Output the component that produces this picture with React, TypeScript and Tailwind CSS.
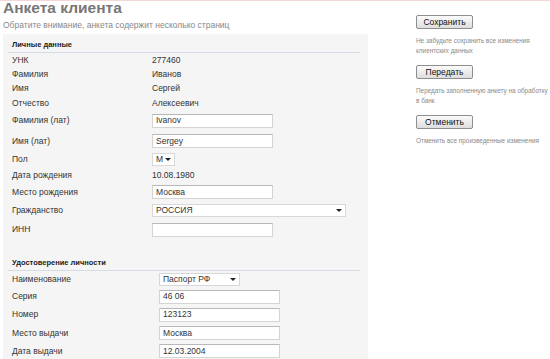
import React from "react";

type Row = { label: string; value?: string; kind?: "text" | "input" | "select"; width?: string; h: string };

const personal: Row[] = [
    { label: "УНК", value: "277460", h: "h-[14px]" },
    { label: "Фамилия", value: "Иванов", h: "h-[14px]" },
    { label: "Имя", value: "Сергей", h: "h-[15px]" },
    { label: "Отчество", value: "Алексеевич", h: "h-[14px]" },
    { label: "Фамилия (лат)", value: "Ivanov", kind: "input", h: "h-[21px]" },
    { label: "Имя (лат)", value: "Sergey", kind: "input", h: "h-[20px]" },
    { label: "Пол", value: "М", kind: "select", width: "w-[23px]", h: "h-[16px]" },
    { label: "Дата рождения", value: "10.08.1980", h: "h-[17px]" },
    { label: "Место рождения", value: "Москва", kind: "input", h: "h-[16px]" },
    { label: "Гражданство", value: "РОССИЯ", kind: "select", width: "w-[194px]", h: "h-[21px]" },
    { label: "ИНН", value: "", kind: "input", h: "h-[17px]" },
];

const identity: Row[] = [
    { label: "Наименование", value: "Паспорт РФ", kind: "select", width: "w-[81px]", h: "h-[17px]" },
    { label: "Серия", value: "46 06", kind: "input", h: "h-[17px]" },
    { label: "Номер", value: "123123", kind: "input", h: "h-[19px]" },
    { label: "Место выдачи", value: "Москва", kind: "input", h: "h-[18px]" },
    { label: "Дата выдачи", value: "12.03.2004", kind: "input", h: "h-[18px]" },
];

const Field = ({ row }: { row: Row }) => {
    if (row.kind === "input") {
        return (
            <div className="w-[121px] h-[14px] bg-white border border-[#d4d4d4] border-t-[#b8b8b8] px-[3px] flex items-center text-[8.5px] text-[#333]">
                {row.value}
            </div>
        );
    }
    if (row.kind === "select") {
        return (
            <div className={`${row.width} h-[13px] bg-white border border-[#d8d8d8] pl-[3px] pr-[3px] flex items-center justify-between text-[8.5px] text-[#333]`}>
                <span>{row.value}</span>
                <span className="w-0 h-0 border-l-[3px] border-r-[3px] border-t-[3px] border-l-transparent border-r-transparent border-t-[#222]" />
            </div>
        );
    }
    return <span className="text-[8.5px] text-[#333]">{row.value}</span>;
};

const Section = ({ title, rows, labelW }: { title: string; rows: Row[]; labelW: string }) => (
    <div>
        <div className="mx-[5px] w-[352px] border-b border-[#d6dce6] pl-[4px] pb-[2px] text-[7.5px] font-bold text-[#222] leading-[10px]">
            {title}
        </div>
        {rows.map((r) => (
            <div key={r.label} className={`flex items-center ${r.h}`}>
                <div className={`${labelW} pl-[9px] text-[8.5px] text-[#333]`}>{r.label}</div>
                <Field row={r} />
            </div>
        ))}
    </div>
);

const Action = ({ label, note }: { label: string; note: React.ReactNode }) => (
    <div className="flex flex-col">
        <button className="w-[57px] h-[14px] border border-[#8e8e8e] rounded-[2px] bg-gradient-to-b from-[#fbfbfb] to-[#dedede] text-[8.5px] text-[#111] leading-none">
            {label}
        </button>
        <p className="mt-[7px] whitespace-nowrap text-[6.4px] leading-[10px] text-[#8a8a8a]">{note}</p>
    </div>
);

export default function App() {
    return (
        <div className="w-[550px] h-[359px] overflow-hidden bg-white border-t border-[#f3d6d6] font-['Liberation_Sans',Arial,sans-serif]">
            <div className="flex">
                <div className="w-[368px] shrink-0">
                    <h1 className="pl-[3px] text-[15.5px] leading-[14px] font-bold text-[#777]">Анкета клиента</h1>
                    <p className="pl-[3px] mt-[4px] text-[8.5px] leading-[12px] text-[#888]">
                        Обратите внимание, анкета содержит несколько страниц
                    </p>
                    <div className="ml-[3px] mt-[3px] w-[365px] h-[330px] bg-[#f5f5f5] pt-[6px]">
                        <Section title="Личные данные" rows={personal} labelW="w-[149px]" />
                        <div className="h-[20px]" />
                        <Section title="Удостоверение личности" rows={identity} labelW="w-[156px]" />
                    </div>
                </div>
                <div className="ml-[48px] mt-[14px] flex flex-col gap-[9px]">
                    <Action label="Сохранить" note={<>Не забудьте сохранить все изменения<br />клиентских данных</>} />
                    <Action label="Передать" note={<>Передать заполненную анкету на обработку<br />в банк</>} />
                    <Action label="Отменить" note="Отменить все произведенные изменения" />
                </div>
            </div>
        </div>
    );
}
